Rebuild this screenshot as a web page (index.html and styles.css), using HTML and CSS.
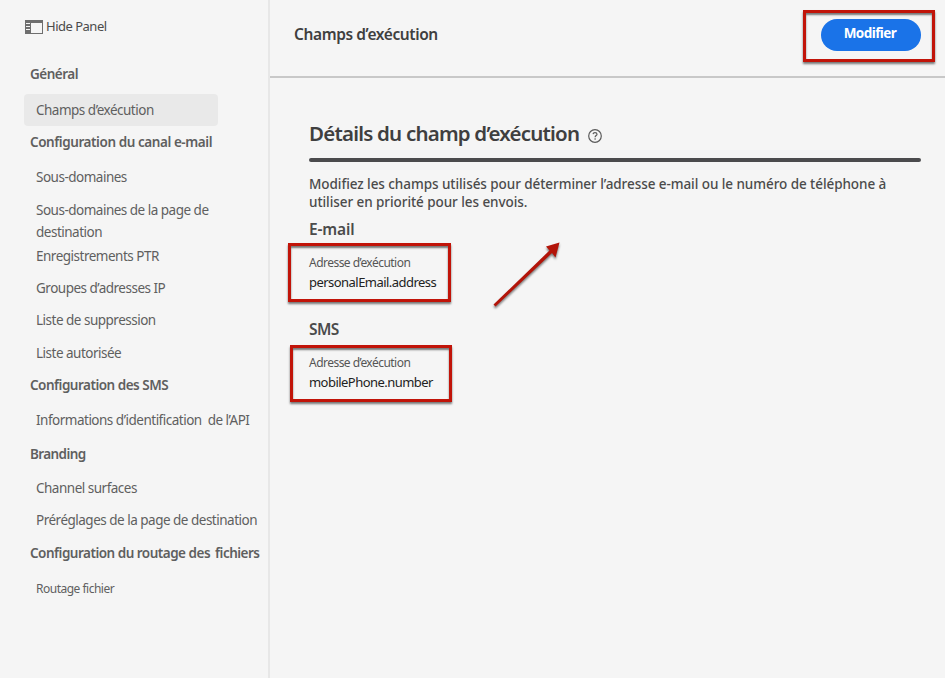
FILE: index.html
```html
<!DOCTYPE html>
<html lang="fr">
<head>
<meta charset="utf-8">
<title>Champs d’exécution</title>
<link rel="stylesheet" href="styles.css">
</head>
<body>
<div class="app">
  <aside class="sidebar">
    <button class="toggle">
      <svg width="18" height="14" viewBox="0 0 18 14"><path fill="#6e6e6e" fill-rule="evenodd" d="M0 0h18v14H0zM6 3v10h11V3zM1 3v1h4V3zM1 6v1h4V6zM1 9v1h4V9z"/></svg>
      <span>Hide Panel</span>
    </button>
    <nav class="nav">
      <h3 class="general">Général</h3>
      <a class="active">Champs d’exécution</a>
      <h3 class="canal">Configuration du canal e-mail</h3>
      <a class="domains">Sous-domaines</a>
      <a class="landing">Sous-domaines de la page de destination</a>
      <a class="ptr">Enregistrements PTR</a>
      <a class="groups">Groupes d’adresses IP</a>
      <a class="suppression">Liste de suppression</a>
      <a class="allowed">Liste autorisée</a>
      <h3 class="sms">Configuration des SMS</h3>
      <a class="api">Informations d’identification <span>de l’API</span></a>
      <h3 class="branding">Branding</h3>
      <a class="surfaces">Channel surfaces</a>
      <a class="presets">Préréglages de la page de destination</a>
      <h3 class="routing">Configuration du routage des <span>fichiers</span></h3>
      <a class="file">Routage fichier</a>
    </nav>
  </aside>
  <div class="page">
    <header class="topbar">
      <h1>Champs d’exécution</h1>
      <div class="callout callout-button"><button class="primary">Modifier</button></div>
    </header>
    <main class="content">
      <div class="heading">
        <h2>Détails du champ d’exécution</h2>
        <svg width="14" height="14" viewBox="0 0 14 14" fill="none" stroke="#5b5b5b" stroke-width="1.2"><circle cx="7" cy="7" r="6.3"/><path d="M5 5.2C5.200 4 6 3.600 7 3.600c1.200 0 2 .7 2 1.600C9 6.500 7.100 6.600 7.100 8.200M7.100 9.300v1.400"/></svg>
      </div>
      <div class="rule"></div>
      <p class="intro">Modifiez les champs utilisés pour déterminer l’adresse e-mail ou le numéro de téléphone à<br>utiliser en priorité pour les envois.</p>
      <h4 class="email-title">E-mail</h4>
      <div class="callout field email"><span class="label">Adresse d’exécution</span><span class="value">personalEmail.address</span></div>
      <h4 class="sms-title">SMS</h4>
      <div class="callout field phone"><span class="label">Adresse d’exécution</span><span class="value">mobilePhone.number</span></div>
    </main>
  </div>
</div>
<svg class="arrow" width="76" height="78" viewBox="0 0 76 78"><path d="M3.500 65.500L59.500 11.500 56 7.500 69.500 3.500 65.500 18.500 62 14 5.500 67.500z" fill="#b31409"/></svg>
</body>
</html>
```
FILE: styles.css
```css
* { box-sizing: border-box; }
body { margin: 0; background: #f5f5f5; font-family: "Noto Sans", "Open Sans", sans-serif; overflow: hidden; }
h1, h2, h3, h4, p { margin: 0; }
button { font: inherit; border: 0; padding: 0; }
.app { display: flex; width: 945px; height: 678px; }
.sidebar { width: 270px; flex: none; border-right: 2px solid #e7e7e7; padding: 16px 0 0 24px; }
.toggle { display: flex; align-items: center; gap: 3px; height: 21px; margin-left: 1px; background: none; color: #4b4b4b; font-size: 13px; line-height: 18px; letter-spacing: -0.5px; white-space: nowrap; }
.toggle span { padding-bottom: 2px; }
.nav { display: flex; flex-direction: column; margin-top: 21px; white-space: nowrap; color: #5f5f5f; }
.nav h3 { height: 32px; padding-left: 6px; font-size: 13.5px; line-height: 32px; font-weight: 600; letter-spacing: -0.5px; }
.nav a { height: 32px; padding-left: 12px; font-size: 13.5px; line-height: 32px; letter-spacing: -0.5px; }
.nav .active { width: 194px; margin-top: 4px; border-radius: 4px; background: #e9e9e9; }
.nav .canal { letter-spacing: -0.43px; }
.nav .domains { margin-top: 3px; }
.nav .landing { width: 200px; height: 44px; margin-top: 6px; line-height: 22px; white-space: normal; }
.nav .ptr { height: 26px; line-height: 26px; }
.nav .groups { margin-top: 3px; }
.nav .allowed { margin-top: 1px; }
.nav .api { margin-top: 3px; }
.nav .api span { margin-left: 3px; }
.nav .branding { margin-top: 2px; letter-spacing: -0.6px; }
.nav .surfaces { margin-top: 2px; }
.nav .routing { margin-top: 1px; }
.nav .routing span { margin-left: 2px; }
.nav .file { margin-top: 4px; font-size: 12px; }
.page { flex: 1; }
.topbar { display: flex; justify-content: space-between; height: 78px; padding: 10px 10px 0 24px; border-bottom: 2px solid #c8c8c8; }
h1 { font-size: 15.5px; line-height: 49px; font-weight: 600; letter-spacing: -0.4px; color: #3f3f3f; }
.callout { border: 3px solid #c11409; box-shadow: 0 2px 2px #777, inset 0 2px 2px #777; }
.callout-button { width: 132px; height: 52px; padding: 6px 0 0 15px; }
.primary { display: block; width: 100px; height: 32px; padding: 0 2px 3px 0; border-radius: 16px; background: #1a73e8; color: #fff; font-size: 13.5px; line-height: 29px; font-weight: 700; letter-spacing: -0.55px; }
.content { padding: 42px 24px 0 39px; }
.heading { display: flex; align-items: center; gap: 9px; height: 38px; padding-bottom: 12px; color: #3f3f3f; }
.heading svg { margin-top: 5px; }
.rule { height: 4px; border-radius: 2px; background: #4b4b4d; }
h2 { font-size: 20.5px; line-height: 28px; font-weight: 600; letter-spacing: -0.79px; }
.intro { margin-top: 13px; font-size: 13.5px; line-height: 18px; font-weight: 500; color: #4b4b4b; white-space: nowrap; letter-spacing: -0.065px; }
h4 { height: 22px; font-size: 15.5px; line-height: 21px; font-weight: 600; color: #4b4b4b; letter-spacing: -0.15px; }
.email-title { margin-top: 8px; }
.field { display: flex; flex-direction: column; width: 163px; height: 59px; margin: 2px 0 0 -21px; padding: 8px 0 0 18px; white-space: nowrap; }
.label { font-size: 12px; line-height: 18px; letter-spacing: -0.53px; color: #555; }
.value { font-size: 13px; line-height: 20px; letter-spacing: -0.54px; color: #222; }
.sms-title { margin-top: 17px; letter-spacing: -0.6px; }
.phone { width: 162px; height: 57px; margin: 4px 0 0 -19px; padding: 6px 0 0 16px; }
.arrow { position: absolute; left: 490px; top: 239px; filter: drop-shadow(0 2px 1px #777); }
```
